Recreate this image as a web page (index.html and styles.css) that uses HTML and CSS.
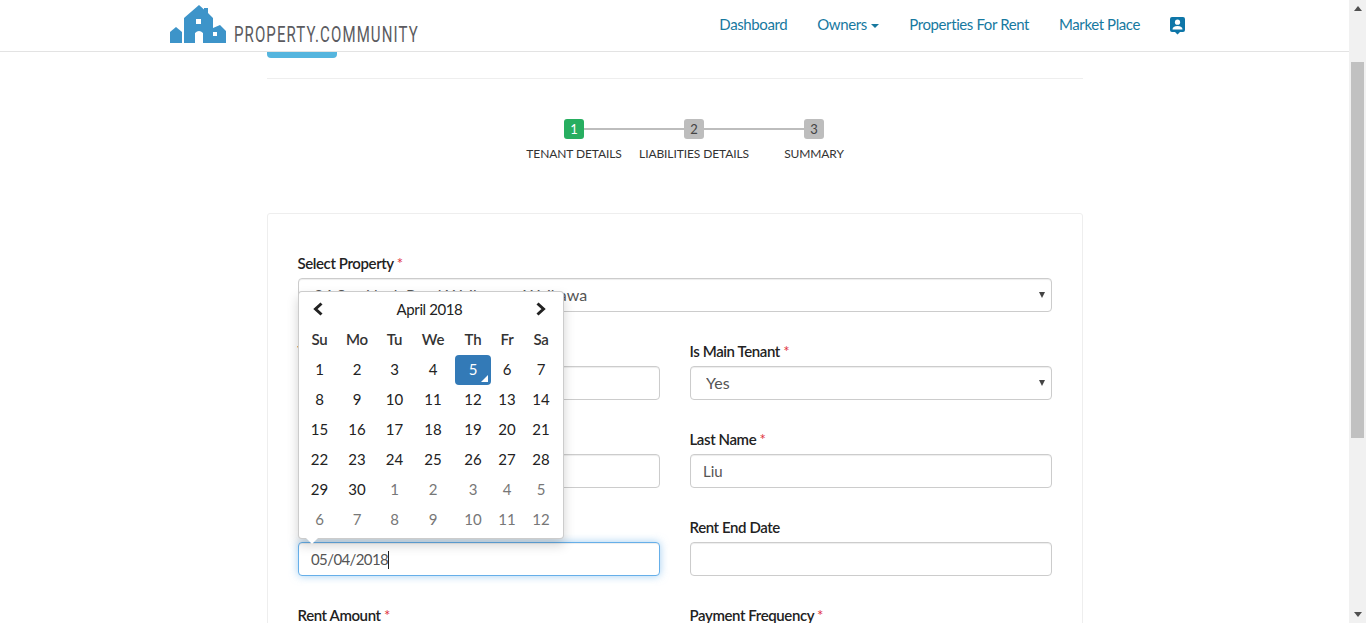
FILE: index.html
```html
<!DOCTYPE html>
<html lang="en">
<head>
    <meta charset="UTF-8">
    <meta name="viewport" content="width=device-width, initial-scale=1.0">
    <title>Add Tenant</title>
    <link rel="stylesheet" href="styles.css">
</head>
<body>
    <div class="window">
        <div class="page">
            <header class="topbar">
                <a class="brand" href="#">
                    <svg class="brand-mark" viewBox="0 0 56 38" width="56" height="38">
                        <path d="M0 27 L6 22 L12 27 V38 H0 Z" fill="#3d94c9"/>
                        <path d="M14 13 L29 0 L34 4.5 V3 H38 V8 L43 13 V23 L50 20 L56 26 V38 H33 V28 Q29 24 25 28 V38 H14 Z" fill="#3d94c9"/>
                        <rect x="26" y="14" width="5" height="5" fill="#fff"/>
                        <rect x="43" y="27" width="4" height="4" fill="#fff"/>
                    </svg>
                    <span class="brand-name">PROPERTY.COMMUNITY</span>
                </a>
                <nav class="nav">
                    <a href="#">Dashboard</a>
                    <a href="#">Owners <span class="nav-caret"></span></a>
                    <a href="#">Properties For Rent</a>
                    <a href="#">Market Place</a>
                    <a class="nav-icon" href="#">
                        <svg viewBox="0 0 15 18" width="15" height="18">
                            <path d="M2 0 H13 Q15 0 15 2 V13 Q15 15 13 15 H10 L7.5 17.5 L5 15 H2 Q0 15 0 13 V2 Q0 0 2 0 Z" fill="#0e76a8"/>
                            <circle cx="7.5" cy="5.2" r="2.6" fill="#fff"/>
                            <path d="M2.5 12.5 Q2.5 9 7.5 9 Q12.5 9 12.5 12.5 Z" fill="#fff"/>
                        </svg>
                    </a>
                </nav>
            </header>

            <main class="container">
                <div class="back-btn"></div>
                <hr class="divider">

                <ol class="stepper">
                    <li class="step active"><span class="step-num">1</span><span class="step-label">Tenant Details</span></li>
                    <li class="step"><span class="step-num">2</span><span class="step-label">Liabilities Details</span></li>
                    <li class="step"><span class="step-num">3</span><span class="step-label">Summary</span></li>
                </ol>

                <form class="card">
                    <div class="field wide">
                        <label>Select Property <em>*</em></label>
                        <div class="select-wrap">
                            <select class="input select">
                                <option>24 Sea Neck Road Waikawa - Waikawa</option>
                            </select>
                        </div>
                    </div>
                    <div class="field">
                        <label>Tenant Type <em>*</em></label>
                        <input class="input" type="text">
                    </div>
                    <div class="field">
                        <label>Is Main Tenant <em>*</em></label>
                        <div class="select-wrap">
                            <select class="input select">
                                <option>Yes</option>
                            </select>
                        </div>
                    </div>
                    <div class="field">
                        <label>First Name <em>*</em></label>
                        <input class="input" type="text">
                    </div>
                    <div class="field">
                        <label>Last Name <em>*</em></label>
                        <input class="input" type="text" value="Liu">
                    </div>
                    <div class="field date-field">
                        <label>Rent Start Date <em>*</em></label>
                        <div class="input focused">05/04/2018<span class="text-caret"></span></div>

                        <div class="datepicker">
                            <div class="dp-grid">
                                <span class="dp-nav dp-prev">
                                    <svg viewBox="0 0 12 14" width="12" height="14"><path d="M9.5 1.5 L3.5 7 L9.5 12.5" fill="none" stroke="#222" stroke-width="3"/></svg>
                                </span>
                                <span class="dp-month">April 2018</span>
                                <span class="dp-nav">
                                    <svg viewBox="0 0 12 14" width="12" height="14"><path d="M2.5 1.5 L8.5 7 L2.5 12.5" fill="none" stroke="#222" stroke-width="3"/></svg>
                                </span>

                                <b>Su</b><b>Mo</b><b>Tu</b><b>We</b><b>Th</b><b>Fr</b><b>Sa</b>

                                <span>1</span><span>2</span><span>3</span><span>4</span><span class="today">5</span><span>6</span><span>7</span>
                                <span>8</span><span>9</span><span>10</span><span>11</span><span>12</span><span>13</span><span>14</span>
                                <span>15</span><span>16</span><span>17</span><span>18</span><span>19</span><span>20</span><span>21</span>
                                <span>22</span><span>23</span><span>24</span><span>25</span><span>26</span><span>27</span><span>28</span>
                                <span>29</span><span>30</span><span class="old">1</span><span class="old">2</span><span class="old">3</span><span class="old">4</span><span class="old">5</span>
                                <span class="old">6</span><span class="old">7</span><span class="old">8</span><span class="old">9</span><span class="old">10</span><span class="old">11</span><span class="old">12</span>
                            </div>
                        </div>
                    </div>
                    <div class="field">
                        <label>Rent End Date</label>
                        <input class="input" type="text">
                    </div>
                    <div class="field">
                        <label>Rent Amount <em>*</em></label>
                        <input class="input" type="text">
                    </div>
                    <div class="field">
                        <label>Payment Frequency <em>*</em></label>
                        <input class="input" type="text">
                    </div>
                </form>
            </main>
        </div>

        <aside class="scrollbar">
            <span class="sb-btn"><i class="sb-up"></i></span>
            <div class="sb-track"><div class="sb-thumb"></div></div>
            <span class="sb-btn"><i class="sb-down"></i></span>
        </aside>
    </div>
</body>
</html>
```

FILE: styles.css
```css
* {
    box-sizing: border-box;
}

html, body {
    margin: 0;
    height: 100%;
    overflow: hidden;
}

body {
    font-family: Lato, "Open Sans", sans-serif;
    font-size: 15px;
    color: #333;
    background: #fff;
}

.window {
    display: flex;
    height: 623px;
}

.page {
    flex: 1;
    min-width: 0;
    overflow: hidden;
}

/* top navigation */
.topbar {
    display: flex;
    justify-content: space-between;
    align-items: center;
    height: 52px;
    padding: 0 164px 0 170px;
    border-bottom: 1px solid #e3e3e3;
}

.brand {
    display: flex;
    align-items: flex-end;
    height: 43px;
    margin-top: -8px;
    text-decoration: none;
}

.brand-mark {
    flex: none;
}

.brand-name {
    flex: none;
    width: 184px;
    margin-left: 8px;
    margin-bottom: -2px;
    font-family: Roboto, sans-serif;
    font-size: 22px;
    line-height: 20px;
    letter-spacing: 1.6px;
    color: #5b5b60;
    white-space: nowrap;
    transform: scaleX(0.683);
    transform-origin: left center;
}

.nav {
    display: flex;
    align-items: center;
    gap: 30px;
    margin-top: -3px;
    letter-spacing: -0.4px;
}

.nav a {
    color: #17799f;
    text-decoration: none;
}

.nav-caret {
    display: inline-block;
    margin-left: 1px;
    vertical-align: middle;
    border-top: 4px solid #17799f;
    border-left: 4px solid transparent;
    border-right: 4px solid transparent;
}

.nav-icon {
    display: flex;
    margin-top: 4px;
}

/* content */
.container {
    width: 816px;
    margin-left: 267px;
}

.back-btn {
    width: 70px;
    height: 6px;
    background: #55b5de;
    border-radius: 0 0 4px 4px;
}

.divider {
    height: 1px;
    margin: 20px 0 0;
    border: 0;
    background: #eee;
}

.stepper {
    display: flex;
    margin: 40px 0 0 247px;
    padding: 0;
    list-style: none;
}

.step {
    position: relative;
    display: flex;
    flex-direction: column;
    align-items: center;
    width: 120px;
    height: 94px;
}

.step:not(:last-child)::after {
    content: "";
    position: absolute;
    top: 9px;
    left: 60px;
    width: 120px;
    height: 2px;
    background: #bdbdbd;
}

.step-num {
    position: relative;
    z-index: 1;
    width: 20px;
    height: 20px;
    border-radius: 3px;
    background: #bdbdbd;
    color: #444;
    font-size: 13px;
    line-height: 20px;
    text-align: center;
}

.step.active .step-num {
    background: #27ae60;
    color: #fff;
}

.step-label {
    margin-top: 7px;
    font-size: 12px;
    line-height: 16px;
    letter-spacing: -0.1px;
    color: #333;
    text-transform: uppercase;
    white-space: nowrap;
}

/* form card */
.card {
    display: grid;
    grid-template-columns: 362px 362px;
    gap: 30px;
    padding: 40px 30px;
    border: 1px solid #eee;
    border-radius: 3px;
}

.field.wide {
    grid-column: 1 / -1;
}

.field label {
    display: block;
    margin: 0 0 6px -0.5px;
    font-size: 15px;
    font-weight: 600;
    line-height: 18px;
    letter-spacing: -0.4px;
    color: #222;
}

.field em {
    font-style: normal;
    font-weight: 400;
    color: #e0323c;
}

.input {
    display: block;
    width: 100%;
    height: 34px;
    padding: 0 12px;
    border: 1px solid #ccc;
    border-radius: 4px;
    background: #fff;
    box-shadow: inset 0 1px 1px rgba(0, 0, 0, 0.075);
    font-family: inherit;
    font-size: 15px;
    line-height: 32px;
    color: #555;
}

.select {
    padding-left: 15px;
    font-size: 16px;
    appearance: none;
    -webkit-appearance: none;
    outline: none;
}

.select-wrap {
    position: relative;
}

.select-wrap::after {
    content: "";
    position: absolute;
    top: 14px;
    right: 7px;
    border-top: 6px solid #444;
    border-left: 3px solid transparent;
    border-right: 3px solid transparent;
}

.focused {
    border-color: #66afe9;
    letter-spacing: -0.6px;
    box-shadow: inset 0 1px 1px rgba(0, 0, 0, 0.075), 0 0 8px rgba(102, 175, 233, 0.6);
}

.text-caret {
    display: inline-block;
    width: 1px;
    height: 18px;
    vertical-align: -4px;
    background: #222;
}

/* datepicker popup */
.date-field {
    position: relative;
}

.datepicker {
    position: absolute;
    left: 0;
    bottom: 37px;
    width: 266px;
    padding: 3px 3px 3px 4px;
    background: #fff;
    border: 1px solid rgba(0, 0, 0, 0.2);
    border-radius: 4px;
    box-shadow: 0 6px 12px rgba(0, 0, 0, 0.175);
}

.datepicker::after {
    content: "";
    position: absolute;
    left: 7px;
    bottom: -6px;
    border-top: 6px solid #fff;
    border-left: 6px solid transparent;
    border-right: 6px solid transparent;
}

.dp-grid {
    display: grid;
    grid-template-columns: 33px 42px 33px 44px 36px 32px 36px;
    grid-auto-rows: 30px;
}

.dp-grid > * {
    display: flex;
    align-items: center;
    justify-content: center;
    padding-bottom: 2px;
    color: #222;
}

.dp-grid .dp-prev {
    padding-right: 3px;
}

.dp-month {
    grid-column: 2 / span 5;
    letter-spacing: -0.4px;
}

.dp-grid b {
    font-weight: 600;
    font-size: 15px;
    letter-spacing: -0.2px;
    color: #333;
}

.dp-grid .old {
    color: #777;
}

.dp-grid .today {
    position: relative;
    border-radius: 4px;
    background: #337ab7;
    color: #fff;
}

.today::after {
    content: "";
    position: absolute;
    right: 3px;
    bottom: 3px;
    border-left: 7px solid transparent;
    border-bottom: 7px solid #fff;
}

/* fake window scrollbar */
.scrollbar {
    display: flex;
    flex-direction: column;
    flex: none;
    width: 17px;
    background: #f1f1f1;
}

.sb-btn {
    display: flex;
    flex: none;
    align-items: center;
    justify-content: center;
    height: 17px;
}

.sb-up {
    border-bottom: 5px solid #505050;
    border-left: 4px solid transparent;
    border-right: 4px solid transparent;
}

.sb-down {
    border-top: 5px solid #505050;
    border-left: 4px solid transparent;
    border-right: 4px solid transparent;
}

.sb-track {
    flex: 1;
    padding: 45px 2px 0;
}

.sb-thumb {
    height: 376px;
    background: #c1c1c1;
}
```
